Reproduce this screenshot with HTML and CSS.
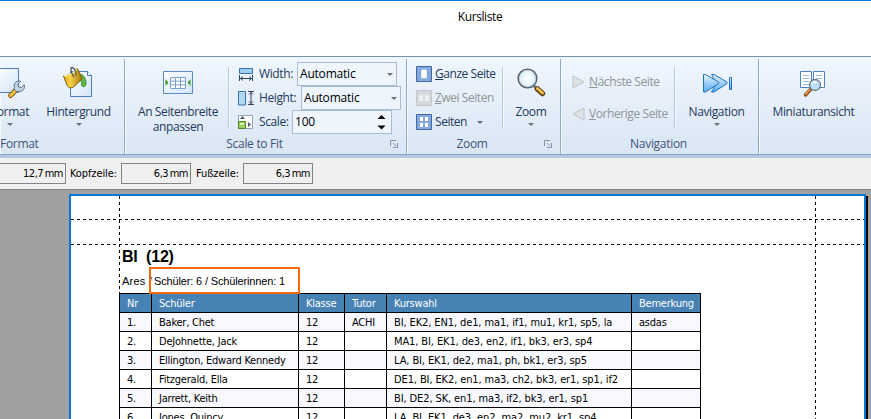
FILE: index.html
```html
<!DOCTYPE html>
<html lang="de">
<head>
<meta charset="utf-8">
<title>Kursliste</title>
<link rel="stylesheet" href="styles.css">
</head>
<body>
<div class="window">
  <header class="titlebar"><span class="title">Kursliste</span></header>

  <div class="ribbon">
    <section class="group g-format">
      <div class="tools">
        <div class="big b-format">
          <svg width="34" height="32" viewBox="0 0 34 32"><defs><linearGradient id="paper" x1="0" y1="0" x2="1" y2="1"><stop offset="0" stop-color="#fff"/><stop offset="1" stop-color="#d3e5fa"/></linearGradient><linearGradient id="gold" x1="0" y1="0" x2="1" y2="0"><stop offset="0" stop-color="#d9a514"/><stop offset=".35" stop-color="#fbd84a"/><stop offset="1" stop-color="#a8740a"/></linearGradient></defs><path d="M1.500 2.500h24v24h-24z" fill="url(#paper)" stroke="#4a7ebd"/><path d="M17.500 29.500l6-6" stroke="#8a5a10" stroke-width="5" stroke-linecap="round"/><path d="M17.500 29.500l6-6" stroke="#f2c250" stroke-width="3" stroke-linecap="round"/><path d="M21.500 21.500c-1.200-4 2-7.500 6-6.300l-2.500 3 .6 2.800 2.800.5 2.800-2.700c1.500 4-2.200 7.600-6 6.400l-1.500.8-2.800-3z" fill="#c5d4e0" stroke="#56738c"/></svg>
          <span class="label">Format</span><i class="arrow"></i>
        </div>
        <div class="big b-back">
          <svg width="32" height="32" viewBox="0 0 32 32"><path d="M7.500 5.500h17l4 4v21h-21z" fill="url(#paper)" stroke="#4a7ebd"/><path d="M24.500 5.500v4h4" fill="#fff" stroke="#4a7ebd"/><path d="M14 8.500c6-1.500 9 3 9 9 0 3.500-3 4-4.500 2 .5-5-1.500-7-5.500-6z" fill="#5cb848" stroke="#287d24" stroke-width=".8"/><path d="M.5 10c3 0 10-3 13.500-7.500 2 3 4 7 5 10.500l-8.500 8C7 23 5 21 4 19z" fill="url(#gold)" stroke="#80600f"/><path d="M1 10c3 0 10-3 12.500-6.500" fill="none" stroke="#fff0a0" stroke-width="1.500"/><path d="M11 11c-3-4-4-9-2-9.500 2.500 0 4 4 4 8" fill="none" stroke="#55585c" stroke-width="1.300"/></svg>
          <span class="label">Hintergrund</span><i class="arrow"></i>
        </div>
      </div>
      <footer class="caption">Format</footer>
    </section>

    <section class="group g-scale">
      <div class="tools">
        <div class="big b-fit">
          <svg width="32" height="32" viewBox="0 0 32 32"><path d="M1.500 5.500h29v22h-29z" fill="url(#paper)" stroke="#5b8ac6"/><path d="M8.500 11.500h15v11h-15zM8.500 15.200h15M8.500 18.800h15M13.500 11.500v11M18.500 11.500v11" fill="#fff" stroke="#7ba0d0"/><path d="M3.500 13v7l3-3.500zM28.500 13v7l-3-3.500z" fill="#3c9a28"/></svg>
          <span class="label">An Seitenbreite</span><span class="label">anpassen</span>
        </div>
        <i class="rule"></i>
        <div class="rows">
          <div class="field">
            <svg width="16" height="16" viewBox="0 0 16 16"><path d="M1.500 2.500h13v5h-13z" fill="#9fd0f8" stroke="#3d6ea8"/><path d="M1.500 9v6M14.500 9v6M2 12.500h12M5 10.500l-2.500 2 2.500 2M11 10.500l2.500 2-2.500 2" fill="none" stroke="#30455f"/></svg>
            <span class="name w1">Width:</span><span class="combo"><span>Automatic</span><i class="arrow"></i></span>
          </div>
          <div class="field">
            <svg width="16" height="16" viewBox="0 0 16 16"><path d="M.5 1.500h7v13.500h-7z" fill="#b2d9f8" stroke="#3d6ea8"/><path d="M10 1.500h6M10 14.500h6M13 2v12M11 4.500l2-2 2 2M11 11.500l2 2 2-2" fill="none" stroke="#30455f"/></svg>
            <span class="name w2">Height:</span><span class="combo"><span>Automatic</span><i class="arrow"></i></span>
          </div>
          <div class="field">
            <svg width="16" height="16" viewBox="0 0 16 16"><path d="M.5 1.500h14v13H.5z" fill="#fff" stroke="#91a2bb"/><path d="M.5 7.500h7v7h-7z" fill="#9cce5c" stroke="#4e852b"/><path d="M2 9h4v2H2z" fill="#d7efb4"/><path d="M2 5l2.500-3L7 5zM10 8v5l3-2.500z" fill="#4a5e7a"/></svg>
            <span class="name w3">Scale:</span><span class="combo"><span>100</span><svg width="9" height="16" viewBox="0 0 9 16"><path d="M.5 5l4-4 4 4zM.5 11.500l4 4 4-4z"/></svg></span>
          </div>
        </div>
      </div>
      <footer class="caption">Scale to Fit<svg class="launch" width="8" height="8" viewBox="0 0 8 8"><path d="M.5 6V.5H6M3 3l3 3M7.500 3v4.500H3" fill="none" stroke="#8493a8"/></svg></footer>
    </section>

    <section class="group g-zoom">
      <div class="tools">
        <div class="rows pages">
          <div class="item"><svg width="16" height="16" viewBox="0 0 16 16"><path d="M.5.5h15v15H.5z" fill="#83a9de" stroke="#42679f"/><path d="M5.500 4h5v8h-5z" fill="#fff" stroke="#dfe9f7"/></svg><span><u>G</u>anze Seite</span></div>
          <div class="item off"><svg width="16" height="16" viewBox="0 0 16 16"><path d="M.5.5h15v15H.5z" fill="#d5d9de" stroke="#c5c9cf"/><path d="M3 5h4v6H3zM9 5h4v6H9z" fill="#eef0f3"/></svg><span><u>Z</u>wei Seiten</span></div>
          <div class="item"><svg width="16" height="16" viewBox="0 0 16 16"><path d="M.5.5h15v15H.5z" fill="#83a9de" stroke="#42679f"/><path d="M4 3h3v4H4zM9 3h3v4H9zM4 9h3v4H4zM9 9h3v4H9z" fill="#fff"/></svg><span>Seiten</span><i class="arrow"></i></div>
        </div>
        <i class="rule"></i>
        <div class="big b-zoom">
          <svg width="32" height="32" viewBox="0 0 32 32"><defs><radialGradient id="lens"><stop offset="0" stop-color="#fff"/><stop offset="1" stop-color="#d9edfa"/></radialGradient></defs><path d="M19 20l4 4" stroke="#6b7278" stroke-width="3"/><path d="M22.500 23l5 4.500" stroke="#5e4317" stroke-width="5.500" stroke-linecap="round"/><path d="M22.500 22.500l5 4.500" stroke="#f3ba4c" stroke-width="3" stroke-linecap="round"/><circle cx="12.500" cy="12.500" r="9.300" fill="url(#lens)" stroke="#5b646b" stroke-width="1.600"/><circle cx="12.500" cy="12.500" r="8.200" fill="none" stroke="#b6c3cb" stroke-width=".8"/></svg>
          <span class="label">Zoom</span><i class="arrow"></i>
        </div>
      </div>
      <footer class="caption">Zoom<svg class="launch" width="8" height="8" viewBox="0 0 8 8"><path d="M.5 6V.5H6M3 3l3 3M7.500 3v4.500H3" fill="none" stroke="#8493a8"/></svg></footer>
    </section>

    <section class="group g-nav">
      <div class="tools">
        <div class="rows steps">
          <div class="item off"><svg width="13" height="14" viewBox="0 0 13 14"><path d="M1 1l11 6-11 6z" fill="#dfe2e6" stroke="#c1c5ca"/></svg><span><u>N</u>ächste Seite</span></div>
          <div class="item off"><svg width="13" height="14" viewBox="0 0 13 14"><path d="M12 1L1 7l11 6z" fill="#dfe2e6" stroke="#c1c5ca"/></svg><span><u>V</u>orherige Seite</span></div>
        </div>
        <i class="rule"></i>
        <div class="big b-nav">
          <svg width="32" height="32" viewBox="0 0 32 32"><defs><linearGradient id="sky" x1="0" y1="0" x2="0" y2="1"><stop offset="0" stop-color="#e3f3ff"/><stop offset="1" stop-color="#56abf0"/></linearGradient></defs><g fill="url(#sky)" stroke="#2470bd" stroke-linejoin="round"><path d="M10.500 8.500h2.500l13 7.500c.5.500.5 1 0 1.500l-13 8.500h-2.500l5-9z"/><path d="M2.500 8.500h2l13 7.500c.5.500.5 1 0 1.500l-13 8.500h-2z"/><path d="M28.500 11.500h2v12h-2z"/></g></svg>
          <span class="label">Navigation</span><i class="arrow"></i>
        </div>
      </div>
      <footer class="caption">Navigation</footer>
    </section>

    <section class="group g-mini">
      <div class="tools">
        <div class="big b-mini">
          <svg width="32" height="32" viewBox="0 0 32 32"><path d="M2.500 5.500h11v16h-11zM15.500 5.500h11v16h-11z" fill="#fff" stroke="#4e82c0"/><path d="M5 9.500h6M5 12.500h6M5 15.500h6M5 18.500h6M18 9.500h6M18 12.500h6" stroke="#9dbbe0"/><path d="M12.500 23.500L7.500 29" stroke="#935216" stroke-width="3.500" stroke-linecap="round"/><path d="M12 23.500L7.500 28.500" stroke="#e6a260" stroke-width="1.500"/><circle cx="17" cy="19" r="5.500" fill="#bcdff7" stroke="#6a7a89" stroke-width="1.300"/><path d="M13.500 18c1-3 5-3 6-1-2 0-4 0-6 1z" fill="#fff"/></svg>
          <span class="label">Miniaturansicht</span>
        </div>
      </div>
      <footer class="caption"></footer>
    </section>
  </div>

  <div class="margins">
    <span class="box first">12,7 mm</span><span class="key">Kopfzeile:</span><span class="box">6,3 mm</span><span class="key k2">Fußzeile:</span><span class="box">6,3 mm</span>
  </div>

  <main class="desk">
    <div class="sheet">
      <i class="guide h h1"></i><i class="guide h h2"></i><i class="guide v v1"></i><i class="guide v v2"></i>
      <h1>BI&nbsp; (12)</h1>
      <p class="summary"><span class="tutor">Ares /</span><span class="mark">Schüler: 6 / Schülerinnen: 1</span></p>
      <table>
        <colgroup><col class="c1"><col class="c2"><col class="c3"><col class="c4"><col class="c5"><col class="c6"></colgroup>
        <thead><tr><th>Nr</th><th>Schüler</th><th>Klasse</th><th>Tutor</th><th>Kurswahl</th><th>Bemerkung</th></tr></thead>
        <tbody>
          <tr><td>1.</td><td>Baker, Chet</td><td>12</td><td>ACHI</td><td>BI, EK2, EN1, de1, ma1, if1, mu1, kr1, sp5, la</td><td>asdas</td></tr>
          <tr><td>2.</td><td>DeJohnette, Jack</td><td>12</td><td></td><td>MA1, BI, EK1, de3, en2, if1, bk3, er3, sp4</td><td></td></tr>
          <tr><td>3.</td><td>Ellington, Edward Kennedy</td><td>12</td><td></td><td>LA, BI, EK1, de2, ma1, ph, bk1, er3, sp5</td><td></td></tr>
          <tr><td>4.</td><td>Fitzgerald, Ella</td><td>12</td><td></td><td>DE1, BI, EK2, en1, ma3, ch2, bk3, er1, sp1, if2</td><td></td></tr>
          <tr><td>5.</td><td>Jarrett, Keith</td><td>12</td><td></td><td>BI, DE2, SK, en1, ma3, if2, bk3, er1, sp1</td><td></td></tr>
          <tr><td>6.</td><td>Jones, Quincy</td><td>12</td><td></td><td>LA, BI, EK1, de3, en2, ma2, mu2, kr1, sp4</td><td></td></tr>
        </tbody>
      </table>
    </div>
  </main>
</div>
</body>
</html>
```
FILE: styles.css
```css
* { box-sizing: border-box; }
body { margin: 0; background: #a0a0a0; font: 12px/16px "Open Sans", "Noto Sans", sans-serif; color: #1e395b; overflow: hidden; }
svg { display: block; flex: none; overflow: visible; }
.window { width: 871px; height: 419px; overflow: hidden; display: flex; flex-direction: column; }
.titlebar { height: 56px; flex: none; background: #fff; border-top: 1px solid #0078d7; padding: 8px 0 0 89px; text-align: center; color: #000; }
.title { letter-spacing: -.4px; }

.ribbon { height: 102px; flex: none; display: flex; border-top: 1px solid #7095b3; border-bottom: 3px solid #b6c8de; background: linear-gradient(#eff6fe, #dae6f4); box-shadow: inset 0 -1px #8ba3c4; letter-spacing: -.38px; }
.group { display: flex; flex-direction: column; border-right: 1px solid #8fa9ca; box-shadow: inset 1px 0 #f5faff; margin: 2px 0 1px; flex: none; }
.g-format { width: 125px; }
.g-scale { width: 282px; }
.g-zoom { width: 154px; }
.g-nav { width: 198px; }
.g-mini { width: 112px; border-right: 0; }
.tools { display: flex; height: 76px; }
.caption { position: relative; height: 18px; text-align: center; line-height: 18px; color: #3e5578; letter-spacing: -.3px; }
.g-format .caption { padding-right: 90px; }
.g-scale .caption { padding-right: 22px; }
.g-zoom .caption { padding-right: 23px; }
.g-nav .caption { padding-right: 2px; }
.launch { position: absolute; right: 8px; top: 5px; }
.big { display: flex; flex-direction: column; align-items: center; padding-top: 7px; flex: none; }
.big svg { margin-bottom: 6px; }
.label { line-height: 15px; white-space: nowrap; }
.arrow { border: 3px solid transparent; border-top: 3px solid #6a6e75; border-bottom: 0; flex: none; }
.big .arrow { margin-top: 4px; }
.b-format { width: 60px; margin-left: -20px; }
.b-back { width: 77px; }
.b-fit { width: 103px; padding-left: 3px; }
.b-zoom { width: 54px; }
.b-nav { width: 81px; }
.b-mini { width: 109px; }
.rule { width: 2px; height: 62px; margin-top: 8px; background: #b5c7dd; border-right: 1px solid #f8fbff; flex: none; }
.rows { display: flex; flex-direction: column; padding-top: 3px; }
.field { height: 24px; display: flex; align-items: center; padding-left: 8px; }
.name { padding-left: 5px; white-space: nowrap; }
.w1 { width: 43px; }
.w2 { width: 47px; }
.w3 { width: 38px; }
.combo { display: flex; align-items: center; justify-content: space-between; width: 100px; height: 24px; border: 1px solid #abbad5; background: #eef5fd; color: #000; padding: 0 3px 0 2px; letter-spacing: -.2px; }
.combo svg { margin-right: 2px; }
.pages { width: 95px; padding-left: 9px; }
.item { display: flex; align-items: center; height: 24px; gap: 3px; white-space: nowrap; }
.item .arrow { margin-left: 7px; }
.pages .item { letter-spacing: -.45px; }
.off { color: #929497; }
.steps { width: 113px; padding: 7px 0 0 11px; }
.steps .item { height: 32px; gap: 4px; letter-spacing: -.42px; }

.margins { height: 32px; flex: none; display: flex; align-items: center; background: #f0f0f0; border-bottom: 1px solid #85868c; color: #000; font: 11px/14px "DejaVu Sans Condensed", "DejaVu Sans", sans-serif; font-stretch: condensed; letter-spacing: -.05px; }
.box { width: 70px; height: 21px; border: 1px solid #83838a; text-align: right; padding: 3px 2px 0 0; letter-spacing: -.5px; word-spacing: -1px; }
.first { width: 66px; border-left: 0; }
.key { width: 55px; padding-left: 4px; white-space: nowrap; letter-spacing: -.1px; }
.k2 { width: 52px; padding-left: 5px; }

.desk { flex: 1; background: #a0a0a0; padding: 4px 0 0 69px; }
.sheet { position: relative; width: 797px; height: 240px; background: #fff; border: 2px solid #0078d7; box-shadow: 2px 2px #000; padding: 50px 0 0 48px; color: #000; }
.guide { position: absolute; }
.h { left: 0; right: 0; height: 1px; background: repeating-linear-gradient(90deg, #000 0 3px, transparent 3px 6px); }
.v { width: 1px; top: 0; background: repeating-linear-gradient(#000 0 3px, transparent 3px 6px); }
.h1 { top: 23px; }
.h2 { top: 48px; }
.v1 { left: 48px; height: 98px; }
.v2 { left: 744px; bottom: 0; }
h1 { margin: 0; padding-left: 3px; font: bold 16px/21px "Liberation Sans", sans-serif; letter-spacing: -.2px; }
.summary { margin: 0; display: flex; height: 26px; font: 11px/28px "Liberation Sans", sans-serif; white-space: nowrap; }
.tutor { width: 30px; padding-left: 3px; letter-spacing: .2px; }
.mark { width: 151px; height: 27px; border: 2px solid #f56b0c; line-height: 24px; padding-left: 3px; letter-spacing: -.15px; }
table { table-layout: fixed; width: 582px; border-collapse: collapse; font: 11px/17px "DejaVu Sans Condensed", "DejaVu Sans", sans-serif; font-stretch: condensed; letter-spacing: -.23px; }
th, td { border: 1px solid #000; height: 19px; padding: 1px 0 0 7px; text-align: left; font-weight: normal; white-space: nowrap; }
td:nth-child(5) { letter-spacing: -.11px; }
th { background: #4682b4; color: #fff; }
tbody tr:nth-child(odd) { background: #f8f8ff; }
.c1 { width: 32px; }
.c2 { width: 147px; }
.c3 { width: 46px; }
.c4 { width: 42px; }
.c5 { width: 245px; }
.c6 { width: 69px; }
```
